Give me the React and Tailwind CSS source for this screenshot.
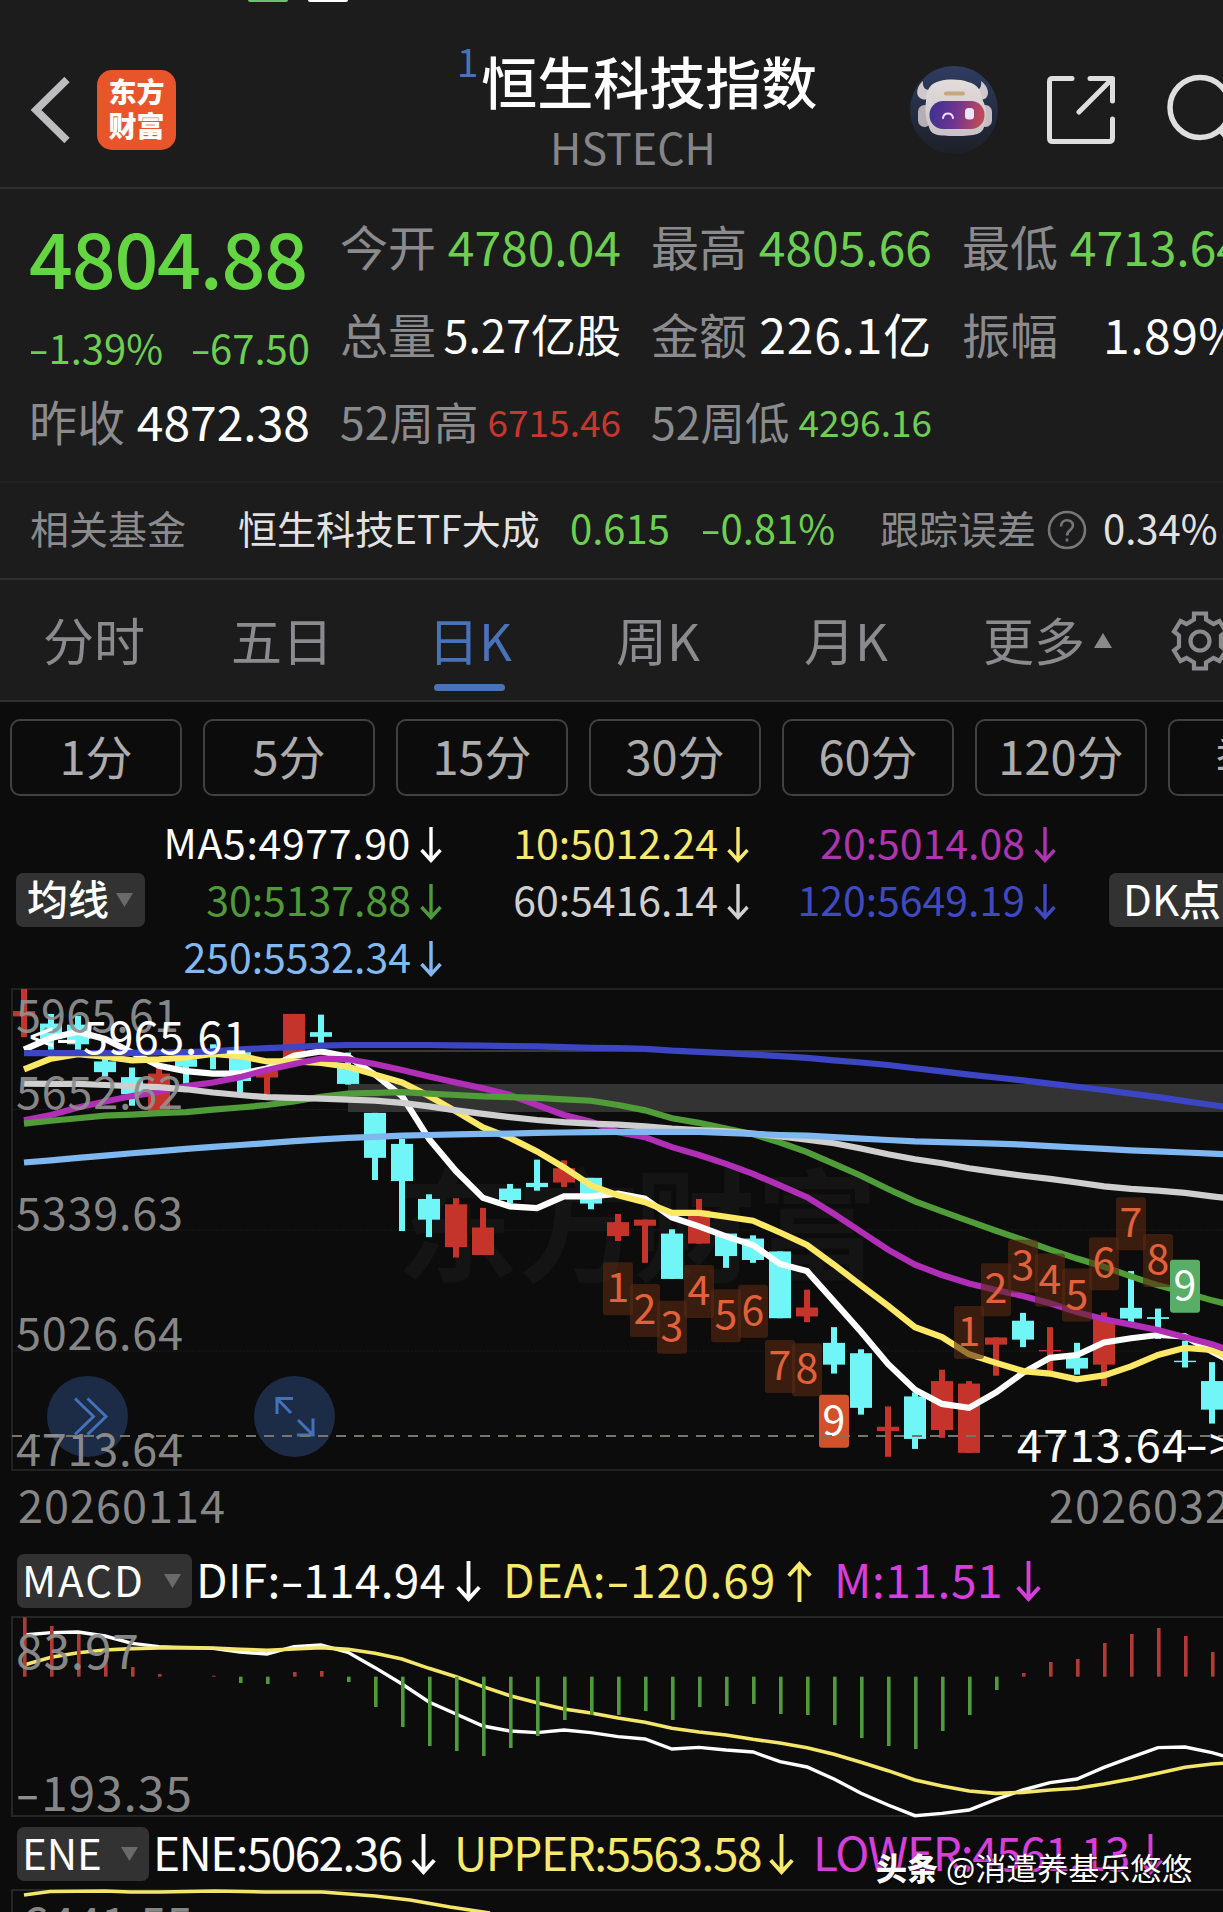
import React from 'react';
import clsx from 'clsx';

const STEP = 27;
const UNIT = 2.8; // chart units per pixel on the price chart
const MACD_UNIT = 3;

// [wickTop, bodyTop, bodyBottom, wickBottom, up]
const candles = [
  [25, 87, 102, 160, 1], [95, 122, 165, 195], [100, 125, 180, 195], [205, 228, 258, 270], [245, 272, 320, 352],
  [235, 262, 368, 368, 1], [222, 222, 243, 290], [180, 205, 215, 250], [202, 202, 283, 315], [245, 255, 273, 320, 1],
  [95, 95, 218, 218, 1], [97, 146, 159, 190], [203, 240, 291, 293], [372, 372, 498, 560], [445, 459, 563, 703],
  [600, 613, 671, 720], [611, 628, 748, 777, 1], [638, 693, 770, 770, 1], [571, 584, 616, 625], [503, 568, 580, 590],
  [505, 527, 567, 580, 1], [554, 554, 626, 642], [655, 678, 717, 731, 1], [671, 671, 688, 792, 1], [698, 710, 837, 837],
  [613, 645, 738, 738, 1], [710, 710, 773, 806], [715, 724, 784, 792], [760, 760, 947, 947], [867, 917, 942, 958, 1],
  [972, 1016, 1077, 1102], [1034, 1045, 1198, 1217], [1194, 1251, 1263, 1335, 1], [1155, 1166, 1285, 1313],
  [1091, 1123, 1260, 1282, 1], [1123, 1130, 1324, 1324, 1], [1001, 1001, 1021, 1108, 1], [932, 954, 1007, 1028],
  [972, 1036, 1040, 1095, 1], [1016, 1058, 1088, 1105], [931, 950, 1077, 1137, 1], [815, 918, 948, 960],
  [920, 944, 949, 1005], [1010, 1066, 1070, 1085], [1070, 1123, 1203, 1242],
];

const ma5 = [195, 162, 145, 165, 203, 240, 255, 262, 262, 248, 212, 200, 215, 265, 325, 445, 535, 610, 634, 639, 606, 606, 598, 612, 665, 690, 718, 742, 795, 815, 900, 985, 1075, 1147, 1187, 1198, 1155, 1100, 1058, 1050, 1015, 1003, 994, 998, 1040, 1080];
const ma10 = [250, 220, 208, 215, 225, 222, 217, 207, 213, 228, 228, 232, 243, 265, 287, 325, 368, 413, 442, 480, 525, 575, 603, 622, 652, 652, 663, 674, 707, 742, 797, 855, 912, 972, 1000, 1048, 1072, 1095, 1102, 1118, 1107, 1082, 1050, 1030, 1036, 1070];
const ma20 = [393, 378, 357, 340, 325, 313, 297, 287, 272, 252, 235, 220, 222, 235, 252, 270, 287, 303, 322, 350, 378, 397, 426, 440, 468, 490, 515, 543, 575, 608, 655, 705, 755, 797, 826, 850, 868, 885, 905, 930, 950, 965, 980, 1000, 1020, 1045];
const ma30 = [402, 394, 387, 380, 377, 373, 370, 363, 357, 350, 340, 327, 318, 316, 314, 318, 322, 326, 328, 330, 334, 338, 350, 365, 387, 400, 416, 432, 455, 482, 515, 548, 585, 620, 648, 675, 702, 728, 755, 780, 803, 830, 855, 875, 897, 915];
const ma60 = [290, 291, 291, 294, 297, 300, 306, 315, 322, 328, 330, 332, 335, 338, 344, 354, 365, 375, 384, 392, 398, 402, 405, 410, 416, 420, 424, 430, 438, 447, 457, 472, 488, 502, 513, 527, 538, 548, 557, 567, 578, 585, 590, 596, 606, 615];
const ma120 = [205, 205, 205, 205, 204, 203, 202, 200, 194, 191, 188, 184, 182, 182, 182, 182, 183, 184, 185, 186, 188, 190, 191, 193, 198, 201, 205, 209, 213, 218, 225, 231, 238, 247, 256, 265, 273, 281, 290, 299, 308, 318, 328, 339, 350, 360];
const ma250 = [511, 505, 498, 492, 485, 479, 473, 467, 462, 457, 451, 446, 442, 439, 436, 434, 432, 431, 430, 428, 427, 426, 425, 425, 425, 425, 428, 431, 434, 436, 440, 444, 448, 452, 454, 456, 458, 461, 465, 469, 473, 477, 480, 483, 486, 490];

// [candle index, badge top, number]
const counts = [
  [22, 790, 1], [23, 851, 2], [24, 898, 3], [25, 798, 4], [26, 866, 5], [27, 853, 6], [28, 1008, 7], [29, 1017, 8], [30, 1161, 9],
  [35, 913, 1], [36, 793, 2], [37, 727, 3], [38, 766, 4], [39, 808, 5], [40, 720, 6], [41, 608, 7], [42, 711, 8], [43, 783, 9],
];

const macdBars = [262, 288, 312, 375, 411, 432, 440, 437, 459, 462, 426, 423, 456, 531, 591, 648, 663, 678, 654, 618, 570, 555, 555, 543, 570, 531, 528, 522, 552, 555, 585, 624, 648, 657, 603, 555, 480, 429, 396, 387, 339, 312, 294, 318, 366];
const dif = [315, 308, 306, 318, 340, 350, 353, 355, 366, 372, 350, 345, 367, 413, 462, 516, 552, 588, 603, 608, 600, 608, 620, 627, 657, 652, 660, 666, 695, 711, 747, 790, 825, 857, 850, 840, 808, 780, 758, 747, 712, 682, 653, 651, 668, 690];
const dea = [405, 382, 368, 360, 356, 354, 353, 354, 358, 361, 357, 353, 358, 370, 387, 415, 440, 470, 497, 518, 537, 549, 564, 577, 595, 606, 615, 628, 639, 653, 673, 697, 722, 750, 768, 783, 790, 787, 780, 775, 762, 747, 730, 712, 702, 697];

const toPoints = (values, unit) => values.map((v, i) => `${24 + i * STEP},${v / unit}`).join(' ');

const Arrow = ({ up, className }) => (
  <svg viewBox="0 0 22 36" className={clsx('shrink-0', className)} fill="none" stroke="currentColor" strokeWidth="3.4">
    {up ? <path d="M11 36V3M1.5 13L11 2.5L20.5 13" /> : <path d="M11 0V33M1.5 23L11 33.5L20.5 23" />}
  </svg>
);

// Widens the minus sign so it takes nearly a full digit.
const Num = ({ children }) => {
  const [before, after] = children.split('-');
  if (after === undefined) return children;
  return (
    <>
      {before}
      <span className="inline-block scale-x-150 px-[0.07em]">-</span>
      {after}
    </>
  );
};

const Robot = () => (
  <svg viewBox="0 0 88 88" className="w-[88px] h-[88px] shrink-0">
    <defs>
      <linearGradient id="disc" x1="0" y1="0" x2="0" y2="1">
        <stop offset="0" stopColor="#2f3d61" />
        <stop offset="0.6" stopColor="#222a3d" />
        <stop offset="1" stopColor="#1d2027" />
      </linearGradient>
      <linearGradient id="visor" x1="0" y1="0" x2="1" y2="0.1">
        <stop offset="0" stopColor="#3a3190" />
        <stop offset="0.5" stopColor="#6c3494" />
        <stop offset="1" stopColor="#bf4a58" />
      </linearGradient>
      <linearGradient id="shell" x1="0" y1="0" x2="0" y2="1">
        <stop offset="0" stopColor="#e3dddc" />
        <stop offset="1" stopColor="#c9c2c5" />
      </linearGradient>
    </defs>
    <circle cx="44" cy="44" r="44" fill="url(#disc)" />
    <path d="M13 15C7 20 5 29 10 32c3 2 7 2 11 0l2-8c-7 1-11-2-10-9zM71 15c7 5 9 13 5 17-3 2-7 2-11 0l-3-8c7 1 10-2 9-9z" fill="#cfc9cb" />
    <rect x="8" y="39" width="13" height="22" rx="6.5" fill="#b5afb4" />
    <rect x="69" y="39" width="13" height="22" rx="6.5" fill="#c4bec1" />
    <path d="M30 15C38 13 50 13 58 16C68 18 71 25 73 35C77 42 77 52 74 61C72 68 66 70 46 70C27 70 21 69 19 61C15 51 15 42 16 35C16 23 21 17 30 15Z" fill="url(#shell)" />
    <rect x="34" y="25.500" width="21" height="4" rx="2" fill="#c9a77c" />
    <rect x="19.500" y="35" width="55" height="28" rx="13.5" fill="url(#visor)" />
    <path d="M33 52c1-6 9-6 10 0" fill="none" stroke="#f0dcff" strokeWidth="2" strokeLinecap="round" />
    <rect x="55" y="42" width="9" height="11.500" rx="3.500" fill="#efe4f4" />
  </svg>
);

const Header = () => (
  <header className="flex h-[187px] border-b-2 border-[#2f2f30]">
    <div className="flex w-[394px] shrink-0 items-center pl-[30px] pt-[30px]">
      <svg viewBox="0 0 42 66" className="w-[42px] h-[66px]" fill="none" stroke="#bdbdbf" strokeWidth="7.500">
        <path d="M37 2.500L6 33L37 63.500" />
      </svg>
      <div className="ml-[25px] flex h-20 w-[79px] flex-col items-center justify-center rounded-[15px] bg-[#e9552b] pb-1 text-[28px] font-black leading-[34px] text-white">
        <span>东方</span>
        <span>财富</span>
      </div>
    </div>
    <div className="flex w-[486px] shrink-0 flex-col items-center">
      <div className="flex pt-[40px]">
        <span className="-mt-[1px] mr-[3px] text-[39px] leading-[38px] text-[#4a72b8]">1</span>
        <h1 className="pt-[10px] text-[56px] font-medium leading-[56px] text-white">恒生科技指数</h1>
      </div>
      <span className="mt-[17px] text-[43px] leading-[43px] text-[#858588] pr-[8px]">HSTECH</span>
    </div>
    <div className="ml-[30px] flex shrink-0 items-start pt-[64px] text-[#dedede]">
      <Robot />
      <svg viewBox="0 0 68 68" className="ml-[49px] mt-[10px] w-[68px] h-[68px] shrink-0" fill="none" stroke="currentColor" strokeWidth="5" strokeLinecap="round" strokeLinejoin="round">
        <path d="M25 2.5H5.500Q2.500 2.500 2.500 5.500V62Q2.500 65.500 5.500 65.500H62Q65.500 65.500 65.500 62V43M43 2.500H65.500V25M65 3L32 36" />
      </svg>
      <svg viewBox="0 0 90 80" className="ml-[51px] mt-[7px] w-[90px] h-[80px] shrink-0" fill="none" stroke="currentColor" strokeWidth="5.5">
        <circle cx="34" cy="34.500" r="30" />
        <path d="M54 57L72 76" />
      </svg>
    </div>
  </header>
);

const Cell = ({ label, value, labelClass = 'text-[48px]', valueClass = 'text-[48px]' }) => (
  <div className="flex h-[72px] items-center justify-between leading-none">
    <span className={clsx('text-[#8b8b8e]', labelClass)}>{label}</span>
    <span className={valueClass}>{value}</span>
  </div>
);

const green = 'text-[#6ccf52]';

const Quote = () => (
  <section className="flex h-[294px] gap-[30px] border-b-2 border-[#222223] pl-[29px] pt-[20px]">
    <div className="w-[281px] shrink-0">
      <div className="h-[119px] pt-[8px] text-[77px] font-medium leading-[77px] tracking-[-1.2px] text-[#64d642]">4804.88</div>
      <div className={clsx('flex h-[37px] items-center justify-between text-[40px] leading-none', green)}>
        <span><Num>-1.39%</Num></span>
        <span><Num>-67.50</Num></span>
      </div>
      <div className="pt-[19px]">
        <Cell label="昨收" value="4872.38" valueClass="text-[48px] text-white" />
      </div>
    </div>
    <div className="w-[281px] shrink-0 space-y-[16px]">
      <Cell label="今开" value="4780.04" valueClass={clsx('text-[48px]', green)} />
      <Cell label="总量" value="5.27亿股" valueClass="text-[45px] text-white" />
      <Cell label="52周高" value="6715.46" labelClass="text-[44.500px]" valueClass="text-[37px] text-[#c8372d]" />
    </div>
    <div className="w-[281px] shrink-0 space-y-[16px]">
      <Cell label="最高" value="4805.66" valueClass={clsx('text-[48px]', green)} />
      <Cell label="金额" value="226.1亿" valueClass="text-[48px] tracking-[0.8px] text-white" />
      <Cell label="52周低" value="4296.16" labelClass="text-[44.500px]" valueClass={clsx('text-[37px]', green)} />
    </div>
    <div className="w-[281px] shrink-0 space-y-[16px]">
      <Cell label="最低" value="4713.64" valueClass={clsx('text-[48px]', green)} />
      <Cell label="振幅" value="1.89%" valueClass="text-[48px] tracking-[0.5px] text-white" />
    </div>
  </section>
);

const RelatedFund = () => (
  <section className="flex h-[97px] items-center whitespace-nowrap border-b-2 border-[#2f2f30] pl-[30px] pb-[7px] text-[39px] leading-none text-[#8b8b8e]">
    <span className="w-[208px] shrink-0">相关基金</span>
    <span className="w-[332px] shrink-0 text-[#e2e2e2]">恒生科技ETF大成</span>
    <span className={clsx('w-[131px] shrink-0 text-[40px]', green)}>0.615</span>
    <span className={clsx('w-[179px] shrink-0 text-[40px]', green)}><Num>-0.81%</Num></span>
    <span className="shrink-0">跟踪误差</span>
    <svg viewBox="0 0 40 40" className="ml-[11px] mt-[5px] w-10 h-10 shrink-0" fill="none" stroke="#77777a" strokeWidth="2.6">
      <circle cx="20" cy="20" r="18" />
      <path d="M14 16.500C14 8 26 8.500 26 15.500C26 20 20 20 20 25.500" />
      <path d="M20 28.500V31.500" />
    </svg>
    <span className="ml-[16px] text-[40px] text-[#e2e2e2]">0.34%</span>
  </section>
);

const tabs = [
  ['分时', 'w-[188px]'], ['五日', 'w-[197px]'], ['日K', 'w-[188px]'], ['周K', 'w-[188px]'], ['月K', 'w-[179px]'],
];

const Tabs = () => (
  <nav className="flex h-[122px] border-b-2 border-[#2f2f30] pl-[43px] pt-[34px] text-[51px] leading-[51px] text-[#8b8b8e]">
    {tabs.map(([name, width]) => (
      <div key={name} className={clsx('shrink-0', width, name === '日K' && 'text-[#4a72b8]')}>
        <div>{name}</div>
        {name === '日K' && <div className="mt-[19px] ml-[6px] h-[7px] w-[71px] rounded-full bg-[#4a72b8]" />}
      </div>
    ))}
    <div className="flex w-[188px] shrink-0">
      <span>更多</span>
      <svg viewBox="0 0 18 15" className="ml-[9px] mt-[19px] w-[18px] h-[15px]" fill="currentColor"><path d="M9 0L18 15H0z" /></svg>
    </div>
    <svg viewBox="0 0 60 60" className="mt-[-3px] -ml-[1px] w-[60px] h-[60px] shrink-0" fill="none" stroke="currentColor" strokeWidth="4.2">
      <path d="M24 2.500H36V8.500L43.500 13L49.500 10L56 20.500L51 24.500V35.500L56 39.500L49.500 50L43.500 47L36 51.500V57.500H24V51.500L16.500 47L10.500 50L4 39.500L9 35.500V24.500L4 20.500L10.500 10L16.500 13L24 8.500Z" />
      <circle cx="30" cy="30" r="9.500" />
    </svg>
  </nav>
);

const periods = ['1分', '5分', '15分', '30分', '60分', '120分', '季K'];

const Periods = () => (
  <div className="flex gap-[21px] pl-[10px] pt-[17px]">
    {periods.map((p) => (
      <button key={p} className="flex h-[77px] w-[172px] shrink-0 items-center justify-center rounded-[10px] border-2 border-[#414141] pb-[6px] text-[47px] leading-none text-[#adadad]">
        {p}
      </button>
    ))}
  </div>
);

const Pill = ({ children, className, arrow = true }) => (
  <div className={clsx('flex h-[54px] shrink-0 items-center rounded-[7px] bg-[#323232] leading-none text-white', className)}>
    <span className="-mt-[5px]">{children}</span>
    {arrow && (
      <svg viewBox="0 0 17 14" className="ml-auto w-[17px] h-[14px]" fill="#6a6a6a"><path d="M0 0H17L8.500 14z" /></svg>
    )}
  </div>
);

const averages = [
  ['MA5:4977.90', 'text-white tracking-[0.65px]'], ['10:5012.24', 'text-[#f7e96f]'], ['20:5014.08', 'text-[#ad35ad]'],
  ['30:5137.88', 'text-[#4f9a3a]'], ['60:5416.14', 'text-[#d0d0d0]'], ['120:5649.19', 'text-[#3f49c0]'],
  ['250:5532.34', 'text-[#83b9f0]'],
];

const Averages = () => (
  <div className="flex h-[192px] items-start pt-[20px]">
    <Pill className="ml-[16px] mt-[57px] w-[129px] pl-[11px] pr-[12px] text-[41px] font-medium">均线</Pill>
    <div className="-ml-[10px] grid w-[921px] shrink-0 grid-cols-3 text-[41px] leading-none">
      {averages.map(([text, color]) => (
        <div key={text} className={clsx('flex h-[57px] items-center justify-end', color)}>
          <span className="-mt-[7px] whitespace-nowrap">{text}</span>
          <Arrow className="ml-[9px] w-[22px] h-[36px]" />
        </div>
      ))}
    </div>
    <Pill arrow={false} className="ml-[53px] mt-[57px] w-[150px] pl-[14px] text-[42px]">
      DK<span className="font-medium">点</span>
    </Pill>
  </div>
);

const ScaleLabel = ({ x, y, w, size = 45, children }) => (
  <text x={x} y={y} textLength={w} fontSize={size} fill="#8f8f8f" fillOpacity="0.95">{children}</text>
);

const lines = [
  [ma5, '#ffffff'], [ma10, '#fde868'], [ma20, '#b02fb6'], [ma30, '#4f9c38'], [ma60, '#cfcfcf'], [ma120, '#3c45c4'], [ma250, '#7fb8f0'],
];

// The svg starts 9px above the frame so that candle units count from its top edge.
const PriceChart = () => (
  <svg viewBox="0 0 1223 570" className="-mt-[8px] block w-[1223px] h-[570px]">
    <g stroke="#222223" fill="none">
      <path d="M1223 9H12V490H1223" strokeWidth="2" />
      <path d="M12 129.500H1223M12 250H1223M12 371H1223" strokeDasharray="2 1" strokeOpacity="0.7" />
    </g>
    <g fill="#141415" fontSize="122" fontWeight="700">
      <text x="396" y="292">东方</text>
      <text x="634" y="292">财富</text>
    </g>
    <path d="M349 71H1223" stroke="#39393a" strokeWidth="2" />
    <rect x="348" y="104" width="875" height="28" fill="#333333" />
    {candles.map(([wt, bt, bb, wb, up], i) => (
      <g key={i} fill={up ? '#c5342a' : '#70f6f6'}>
        <rect x={24 + i * STEP - 3} y={wt / UNIT} width="6" height={(wb - wt) / UNIT} />
        <rect x={24 + i * STEP - 11} y={bt / UNIT} width="22" height={(bb - bt) / UNIT} />
      </g>
    ))}
    {lines.map(([values, color]) => (
      <polyline key={color} points={toPoints(values, UNIT)} fill="none" stroke={color} strokeWidth="6.2" />
    ))}
    {counts.map(([i, top, n]) => (
      <g key={`${i}-${n}`}>
        <rect
          x={24 + i * STEP - 15}
          y={top / UNIT}
          width="30"
          height="53"
          rx="3"
          fill={n < 9 ? '#5a2a12' : i > 40 ? '#58ad67' : '#d2502a'}
          fillOpacity={n < 9 ? 0.6 : 1}
        />
        <text x={24 + i * STEP} y={top / UNIT + 40} textAnchor="middle" fontSize="41" fill={n < 9 ? '#e3613a' : '#fff'}>{n}</text>
      </g>
    ))}
    <g fill="#1c2b46">
      <circle cx="87.500" cy="436.500" r="40.500" />
      <circle cx="294.500" cy="436.500" r="40.500" />
    </g>
    <g fill="none" stroke="#4472b9" strokeWidth="3">
      <path d="M75 418.500L93.500 436.500L75 454.500M87.500 418.500L106 436.500L87.500 454.500" />
      <path d="M293 418.500H277V434M277 418.500L291 433M313 438.500V455H297M313 455L298 440" />
    </g>
    <path d="M12 456H1223" stroke="#77756b" strokeWidth="2" strokeDasharray="10 8" />
    <ScaleLabel x="16" y="52" w="163">5965.61</ScaleLabel>
    <ScaleLabel x="16" y="128.500" w="167">5652.62</ScaleLabel>
    <ScaleLabel x="16" y="249.500" w="167">5339.63</ScaleLabel>
    <ScaleLabel x="16" y="369.500" w="167">5026.64</ScaleLabel>
    <ScaleLabel x="16" y="486" w="167">4713.64</ScaleLabel>
    <g fill="#fff" fontSize="45">
      <text x="29" y="74">&lt;</text>
      <text transform="translate(55 74) scale(1.5 1)">-</text>
      <text x="83" y="73.500" textLength="165">5965.61</text>
      <text x="1017" y="481.500" textLength="170">4713.64</text>
      <text transform="translate(1185 481) scale(1.5 1)">-</text>
      <text x="1209" y="481">&gt;</text>
    </g>
    <ScaleLabel x="18" y="542.500" w="207">20260114</ScaleLabel>
    <ScaleLabel x="1049" y="542.500" w="181">2026032</ScaleLabel>
  </svg>
);

const Indicator = ({ name, pillClass, values, className }) => (
  <div className={clsx('flex h-[54px] items-center whitespace-nowrap pl-[17px] text-[46px] leading-none', className)}>
    <Pill className={clsx('mr-[4px] pl-[5px] pr-[11px] text-[42px]', pillClass)}>{name}</Pill>
    {values.map(([text, color, width, up]) => (
      <div key={text} className={clsx('flex shrink-0 items-center', color, width)}>
        <span className="-mt-[7px]"><Num>{text}</Num></span>
        <Arrow up={up} className="ml-auto mr-[22px] w-[25px] h-[41px]" />
      </div>
    ))}
  </div>
);

const MacdChart = () => (
  <svg viewBox="0 0 1223 219" className="block w-[1223px] h-[219px]">
    <path d="M1223 9H12V208H1223" fill="none" stroke="#262627" strokeWidth="2" />
    <g transform="translate(0 -78)">
      <polyline points={toPoints(dif, MACD_UNIT)} fill="none" stroke="#fff" strokeWidth="3.4" />
      <polyline points={toPoints(dea, MACD_UNIT)} fill="none" stroke="#f3e66b" strokeWidth="3.6" />
      {macdBars.map((v, i) => (
        <rect
          key={i}
          x={23 + i * STEP}
          y={Math.min(v, 440) / MACD_UNIT}
          width="3.600"
          height={Math.abs(v - 440) / MACD_UNIT}
          fill={v > 440 ? '#4f9a3a' : '#b23a36'}
        />
      ))}
      <ScaleLabel x="16" y="139" w="123" size="48">83.97</ScaleLabel>
      <text transform="translate(15 281) scale(1.5 1)" fontSize="48" fill="#8f8f8f">-</text>
      <ScaleLabel x="41" y="281" w="151" size="48">193.35</ScaleLabel>
    </g>
  </svg>
);

const EneChart = () => (
  <svg viewBox="0 0 1223 32" className="block w-[1223px] h-[32px]">
    <path d="M1223 9H12V40" fill="none" stroke="#262627" strokeWidth="2" />
    <polyline points="24,14 50,10.500 105,10 130,11 160,11 215,10 265,11 322,11 375,15 410,19 450,26 490,32" fill="none" stroke="#f3e66b" strokeWidth="3.6" />
    <ScaleLabel x="22" y="61" w="171" size="48">6441.55</ScaleLabel>
  </svg>
);

export default function App() {
  return (
    <div className="relative h-[1912px] w-[1223px] overflow-hidden bg-[#0c0c0c] font-['Noto_Sans_CJK_SC','Noto_Sans',sans-serif]">
      <div className="bg-[#1c1c1c]">
        <div className="flex h-[2px] gap-[20px] pl-[248px]">
          <div className="w-10 rounded-b-full bg-[#6fbf73]" />
          <div className="w-10 rounded-b-full bg-white" />
        </div>
        <Header />
        <Quote />
        <RelatedFund />
        <Tabs />
      </div>
      <Periods />
      <Averages />
      <PriceChart />
      <Indicator
        name="MACD"
        className="mt-[4px]"
        pillClass="w-[175px] tracking-[2px]"
        values={[
          ['DIF:-114.94', 'text-white tracking-[0.3px]', 'w-[307px]'],
          ['DEA:-120.69', 'text-[#f6e96e] tracking-[1px]', 'w-[331px]', true],
          ['M:11.51', 'text-[#d63fdc] tracking-[0.6px]', 'w-[229px]'],
        ]}
      />
      <MacdChart />
      <Indicator
        name="ENE"
        pillClass="w-[132px]"
        values={[
          ['ENE:5062.36', 'text-white tracking-[-1.600px]', 'w-[305px]'],
          ['UPPER:5563.58', 'text-[#f6e96e] tracking-[-1.500px]', 'w-[362px] -ml-[4px]'],
          ['LOWER:4561.13', 'text-[#d63fdc] tracking-[-1.300px]', 'w-[372px] -ml-[3px]'],
        ]}
      />
      <EneChart />
      <div className="absolute left-[876px] top-[1849px] flex items-center whitespace-nowrap text-[31px] leading-[36px] text-white [text-shadow:1px_1px_2px_#000]">
        <span className="font-black">头条</span>
        <span className="ml-[8px]">@消遣养基乐悠悠</span>
      </div>
    </div>
  );
}
